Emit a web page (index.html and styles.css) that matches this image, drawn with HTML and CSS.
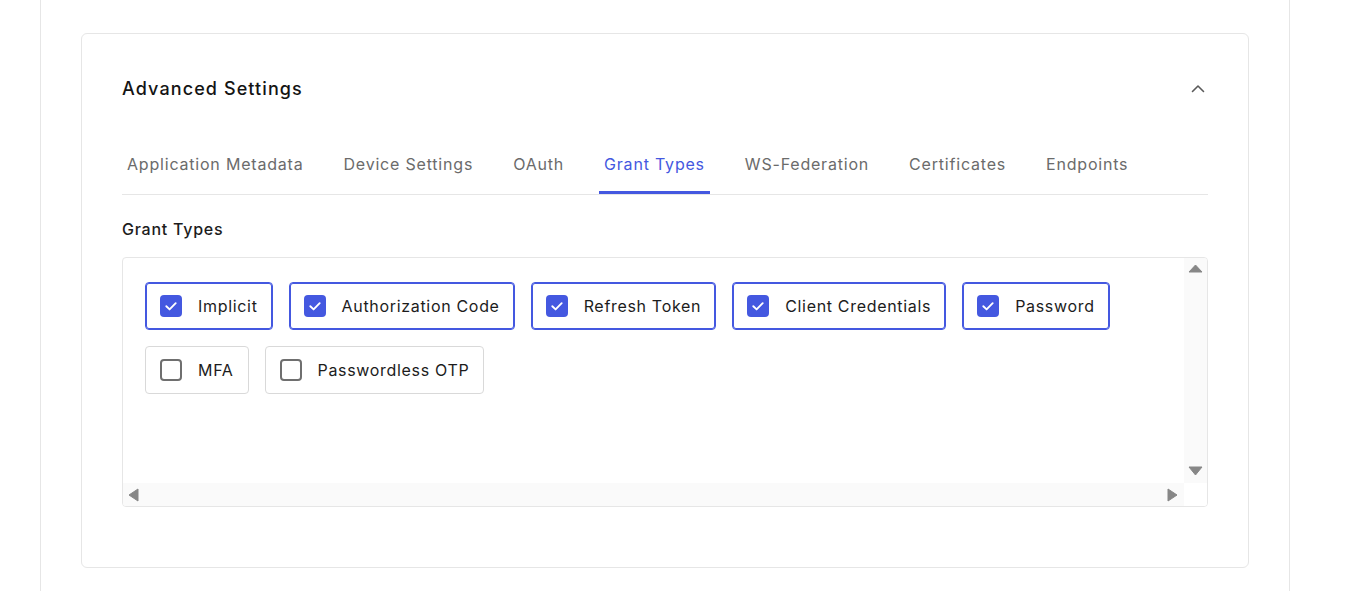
FILE: index.html
```html
<!DOCTYPE html>
<html lang="en">
<head>
<meta charset="utf-8">
<title>Advanced Settings</title>
<link rel="stylesheet" href="styles.css">
</head>
<body>
<div class="page">
  <section class="card">
    <div class="card-head">
      <h2 class="card-title">Advanced Settings</h2>
      <svg class="chevron" width="20" height="20" viewBox="0 0 20 20" aria-hidden="true"><path d="M4.5 12.5 L10 7 L15.5 12.5" fill="none" stroke="#5a5a5a" stroke-width="1.6" stroke-linecap="round" stroke-linejoin="round"/></svg>
    </div>
    <nav class="tabs">
      <span class="tab">Application Metadata</span>
      <span class="tab">Device Settings</span>
      <span class="tab">OAuth</span>
      <span class="tab active">Grant Types</span>
      <span class="tab">WS-Federation</span>
      <span class="tab">Certificates</span>
      <span class="tab">Endpoints</span>
    </nav>
    <h3 class="section-label">Grant Types</h3>
    <div class="scrollbox">
      <div class="scroll-content">
        <label class="chip checked"><span class="box"><svg width="22" height="22" viewBox="0 0 22 22"><path d="M6.3 11.2 L9.6 14.4 L15.7 8.2" fill="none" stroke="#fff" stroke-width="1.9" stroke-linecap="round" stroke-linejoin="round"/></svg></span><span class="chip-text">Implicit</span></label>
        <label class="chip checked"><span class="box"><svg width="22" height="22" viewBox="0 0 22 22"><path d="M6.3 11.2 L9.6 14.4 L15.7 8.2" fill="none" stroke="#fff" stroke-width="1.9" stroke-linecap="round" stroke-linejoin="round"/></svg></span><span class="chip-text">Authorization Code</span></label>
        <label class="chip checked"><span class="box"><svg width="22" height="22" viewBox="0 0 22 22"><path d="M6.3 11.2 L9.6 14.4 L15.7 8.2" fill="none" stroke="#fff" stroke-width="1.9" stroke-linecap="round" stroke-linejoin="round"/></svg></span><span class="chip-text">Refresh Token</span></label>
        <label class="chip checked"><span class="box"><svg width="22" height="22" viewBox="0 0 22 22"><path d="M6.3 11.2 L9.6 14.4 L15.7 8.2" fill="none" stroke="#fff" stroke-width="1.9" stroke-linecap="round" stroke-linejoin="round"/></svg></span><span class="chip-text">Client Credentials</span></label>
        <label class="chip checked"><span class="box"><svg width="22" height="22" viewBox="0 0 22 22"><path d="M6.3 11.2 L9.6 14.4 L15.7 8.2" fill="none" stroke="#fff" stroke-width="1.9" stroke-linecap="round" stroke-linejoin="round"/></svg></span><span class="chip-text">Password</span></label>
        <label class="chip"><span class="box"></span><span class="chip-text">MFA</span></label>
        <label class="chip"><span class="box"></span><span class="chip-text">Passwordless OTP</span></label>
      </div>
      <div class="vtrack">
        <svg width="15" height="9" viewBox="0 0 15 9"><polygon points="7.5,1 14,8 1,8" fill="#878787" stroke="#878787" stroke-width="1" stroke-linejoin="round"/></svg>
        <svg width="15" height="10" viewBox="0 0 15 10"><polygon points="1,1 14,1 7.5,9" fill="#878787" stroke="#878787" stroke-width="1" stroke-linejoin="round"/></svg>
      </div>
      <div class="htrack">
        <svg width="11" height="14" viewBox="0 0 11 14"><polygon points="10,1 10,13 1,7" fill="#878787" stroke="#878787" stroke-width="1" stroke-linejoin="round"/></svg>
        <svg width="11" height="14" viewBox="0 0 11 14"><polygon points="1,1 1,13 10,7" fill="#878787" stroke="#878787" stroke-width="1" stroke-linejoin="round"/></svg>
      </div>
      <div class="corner"></div>
    </div>
  </section>
</div>
</body>
</html>
```
FILE: styles.css
```css
* { box-sizing: border-box; }
html, body { margin: 0; padding: 0; background: #fff; }
body {
  font-family: Inter, "Noto Sans", "Liberation Sans", sans-serif;
  color: #1c1c1c;
  height: 591px;
  overflow: hidden;
}
.page {
  margin-left: 40px;
  width: 1250px;
  min-height: 591px;
  border-left: 1px solid #e6e6e6;
  border-right: 1px solid #e6e6e6;
  padding: 33px 40px 0 40px;
}
.card {
  border: 1px solid #e6e6e6;
  border-radius: 6px;
  padding: 40px 40px 60px 40px;
}
.card-head {
  display: flex;
  align-items: center;
  justify-content: space-between;
  height: 30px;
}
.card-title {
  margin: 0;
  font-size: 18px;
  font-weight: 500;
  line-height: 30px;
  letter-spacing: 1.1px;
  color: #141414;
}
.chevron { display: block; }
.tabs {
  display: flex;
  gap: 30px;
  margin-top: 30px;
  border-bottom: 1px solid #e6e6e6;
}
.tab {
  padding: 18px 5px 15px 5px;
  font-size: 16px;
  line-height: 24px;
  letter-spacing: 0.8px;
  color: #6b6b6b;
  border-bottom: 3px solid transparent;
  white-space: nowrap;
}
.tab.active {
  color: #4458e0;
  border-bottom-color: #4458e0;
}
.section-label {
  margin: 22px 0 16px 0;
  font-size: 16px;
  font-weight: 500;
  line-height: 24px;
  letter-spacing: 0.75px;
  color: #1c1c1c;
}
.scrollbox {
  display: grid;
  grid-template-columns: 1fr 23px;
  grid-template-rows: 225px 23px;
  border: 1px solid #e6e6e6;
  border-radius: 4px;
  overflow: hidden;
}
.scroll-content {
  display: flex;
  flex-wrap: wrap;
  align-content: flex-start;
  gap: 16px;
  padding: 24px 22px;
}
.chip {
  display: flex;
  align-items: center;
  gap: 16px;
  height: 48px;
  padding: 0 14px;
  border: 1px solid #d9d9d9;
  border-radius: 4px;
  background: #fff;
}
.chip.checked {
  border-color: #4458e0;
  box-shadow: inset 0 0 0 1px #4458e0;
}
.box {
  width: 22px;
  height: 22px;
  border: 2px solid #6f6f6f;
  border-radius: 4px;
  display: block;
  flex: none;
}
.chip.checked .box {
  border: none;
  background: #4458e0;
}
.box svg { display: block; }
.chip-text {
  font-size: 16px;
  line-height: 24px;
  letter-spacing: 0.68px;
  color: #1c1c1c;
  white-space: nowrap;
}
.vtrack {
  background: #fafafa;
  display: flex;
  flex-direction: column;
  justify-content: space-between;
  align-items: center;
  padding: 6px 0 7px 0;
}
.vtrack svg, .htrack svg { display: block; }
.htrack {
  background: #fafafa;
  display: flex;
  justify-content: space-between;
  align-items: center;
  padding: 0 6px 0 5px;
}
.corner { background: #fff; }
```
